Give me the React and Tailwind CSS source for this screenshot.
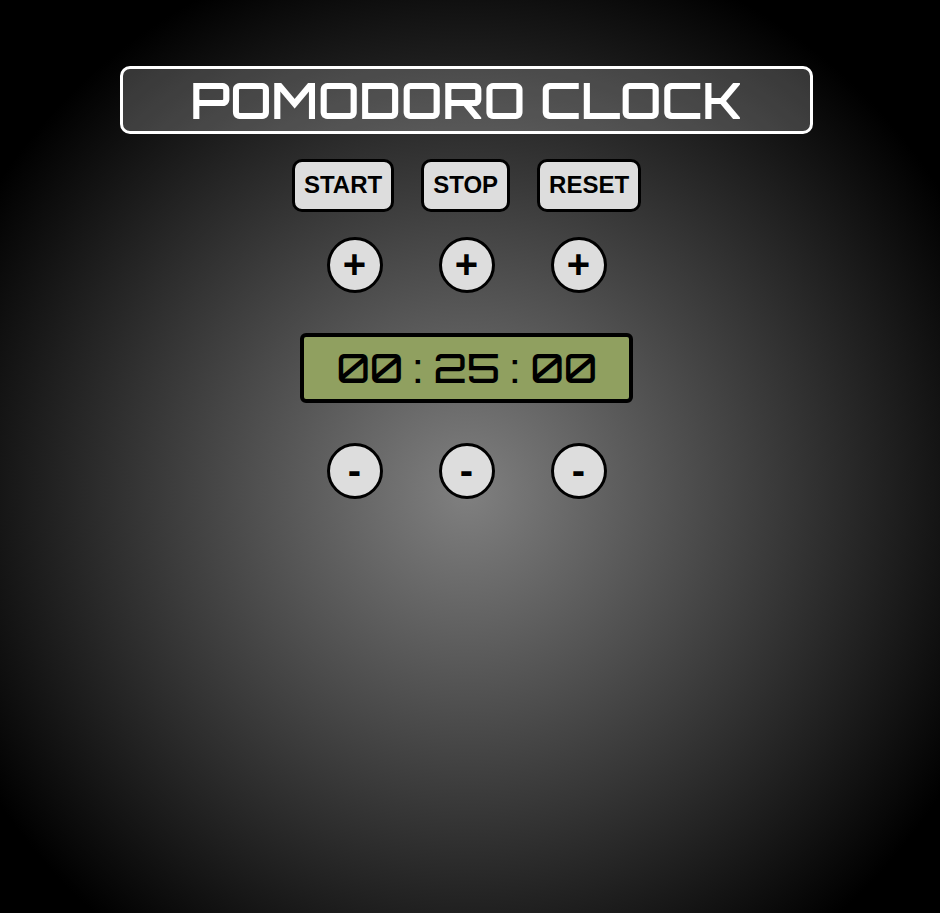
import { useEffect, useState } from "react";

const UNITS = [
  { name: "hours", seconds: 3600 },
  { name: "minutes", seconds: 60 },
  { name: "seconds", seconds: 1 },
];

const pad = (n) => String(n).padStart(2, "0");

function ControlButton({ children, onClick }) {
  return (
    <button
      type="button"
      onClick={onClick}
      className="h-[53px] cursor-pointer rounded-[10px] border-3 border-black bg-[#ddd] px-[9px] pb-0.5 text-2xl font-bold text-black"
    >
      {children}
    </button>
  );
}

function StepRow({ sign, label, onStep }) {
  return (
    <div className="flex justify-center gap-14">
      {UNITS.map((unit) => (
        <button
          key={unit.name}
          type="button"
          aria-label={`${label} ${unit.name}`}
          onClick={() => onStep(unit.seconds)}
          className="flex size-14 cursor-pointer items-center justify-center rounded-full border-3 border-black bg-[#ddd] pb-0.5 text-[40px] leading-none font-bold text-black"
        >
          {sign}
        </button>
      ))}
    </div>
  );
}

export default function App() {
  const [time, setTime] = useState(25 * 60);
  const [running, setRunning] = useState(false);

  useEffect(() => {
    if (!running) return undefined;
    const id = setInterval(() => setTime((t) => Math.max(0, t - 1)), 1000);
    return () => clearInterval(id);
  }, [running]);

  const reset = () => {
    setRunning(false);
    setTime(25 * 60);
  };

  return (
    <main className="flex min-h-screen flex-col items-center bg-black bg-[radial-gradient(circle_at_calc(50%_-_3px)_492px,#808080,#000_562px)] pt-[66px] pr-[7px] font-['Liberation_Sans',Arial,sans-serif]">
      <h1 className="flex h-[68px] w-3/4 max-w-[693px] items-center justify-center rounded-[10px] border-3 border-white bg-white/20 font-['Orbitron','DejaVu_Sans',sans-serif] text-[50px] leading-none font-semibold whitespace-nowrap text-white">
        POMODORO CLOCK
      </h1>

      <div className="mt-[25px] flex justify-center gap-[27px]">
        <ControlButton onClick={() => setRunning(true)}>START</ControlButton>
        <ControlButton onClick={() => setRunning(false)}>STOP</ControlButton>
        <ControlButton onClick={reset}>RESET</ControlButton>
      </div>

      <div className="mt-[25px] flex flex-col items-center gap-10">
        <StepRow sign="+" label="Add" onStep={(s) => setTime((t) => t + s)} />
        <div
          role="timer"
          className="flex h-[70px] w-[333px] items-center justify-center rounded-md border-4 border-black bg-[#90a060] font-['Orbitron','Inter',sans-serif] text-[40px] leading-none font-medium text-black slashed-zero"
        >
          <span className="w-[66px] text-center">{pad(Math.floor(time / 3600))}</span>
          <span className="w-[31px] text-center">:</span>
          <span className="w-[66px] text-center">{pad(Math.floor(time / 60) % 60)}</span>
          <span className="w-[31px] text-center">:</span>
          <span className="w-[66px] text-center">{pad(time % 60)}</span>
        </div>
        <StepRow
          sign="-"
          label="Subtract"
          onStep={(s) => setTime((t) => Math.max(0, t - s))}
        />
      </div>
    </main>
  );
}
